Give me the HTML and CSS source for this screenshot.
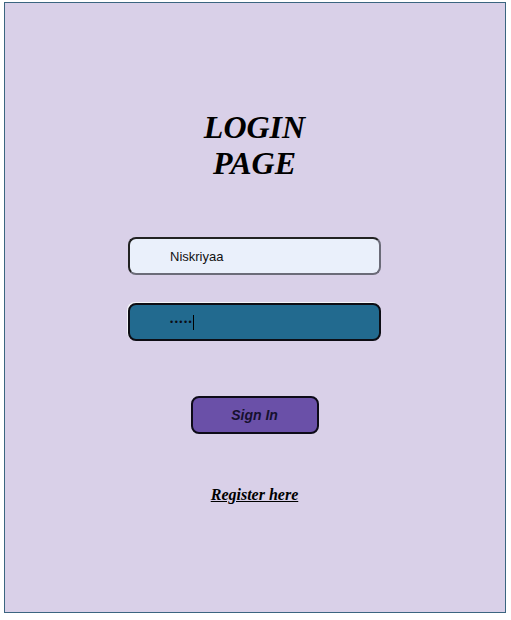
FILE: index.html
```html
<!DOCTYPE html>
<html>
<head>
<meta charset="utf-8">
<link rel="stylesheet" href="styles.css">
</head>
<body>
<div class="panel">
  <h1 class="title">LOGIN<br>PAGE</h1>
  <div class="field field-user"><span class="value">Niskriyaa</span></div>
  <div class="field field-pass"><span class="dots">•••••</span><span class="caret"></span></div>
  <button class="signin">Sign In</button>
  <a class="register" href="#">Register here</a>
</div>
</body>
</html>
```
FILE: styles.css
```css
html, body {
  margin: 0;
  padding: 0;
  background: #ffffff;
}
body {
  padding: 2px 0 0 4px;
}
.panel {
  box-sizing: border-box;
  width: 502px;
  height: 611px;
  border: 1px solid #3b6580;
  background: #d9d0e8;
  display: flex;
  flex-direction: column;
  align-items: center;
  padding-top: 106px;
  padding-right: 1px;
}
.title {
  margin: 0 0 56px 0;
  font-family: "Liberation Serif", serif;
  font-weight: bold;
  font-style: italic;
  font-size: 32px;
  line-height: 36px;
  text-align: center;
  color: #000;
}
.field {
  box-sizing: border-box;
  width: 253px;
  height: 38px;
  border-radius: 8px;
  display: flex;
  align-items: center;
  padding-left: 40px;
  font-family: "Liberation Sans", sans-serif;
  font-size: 13px;
}
.field-user {
  background: #eaf0fb;
  border: 2px solid #6b6b78;
  border-top-color: #222;
  border-left-color: #222;
  color: #111;
}
.field-pass {
  margin-top: 28px;
  background: #226a8f;
  border: 2px solid #0d0d14;
  box-shadow: -1px -1px 0 #f4f4f8;
  color: #0c0c14;
}
.dots {
  font-size: 9px;
  letter-spacing: 1.5px;
  line-height: 1;
}
.caret {
  display: inline-block;
  width: 1px;
  height: 15px;
  background: #000;
  margin-left: 0;
}
.signin {
  margin-top: 55px;
  box-sizing: border-box;
  width: 128px;
  height: 38px;
  border: 2px solid #0d0a18;
  border-radius: 8px;
  background: #6a50a8;
  font-family: "Liberation Sans", sans-serif;
  font-weight: bold;
  font-style: italic;
  font-size: 14px;
  color: #16102e;
  padding: 0;
}
.register {
  margin-top: 51px;
  font-family: "Liberation Serif", serif;
  font-weight: bold;
  font-style: italic;
  font-size: 16px;
  line-height: 20px;
  color: #000;
  text-decoration: underline;
}
```
